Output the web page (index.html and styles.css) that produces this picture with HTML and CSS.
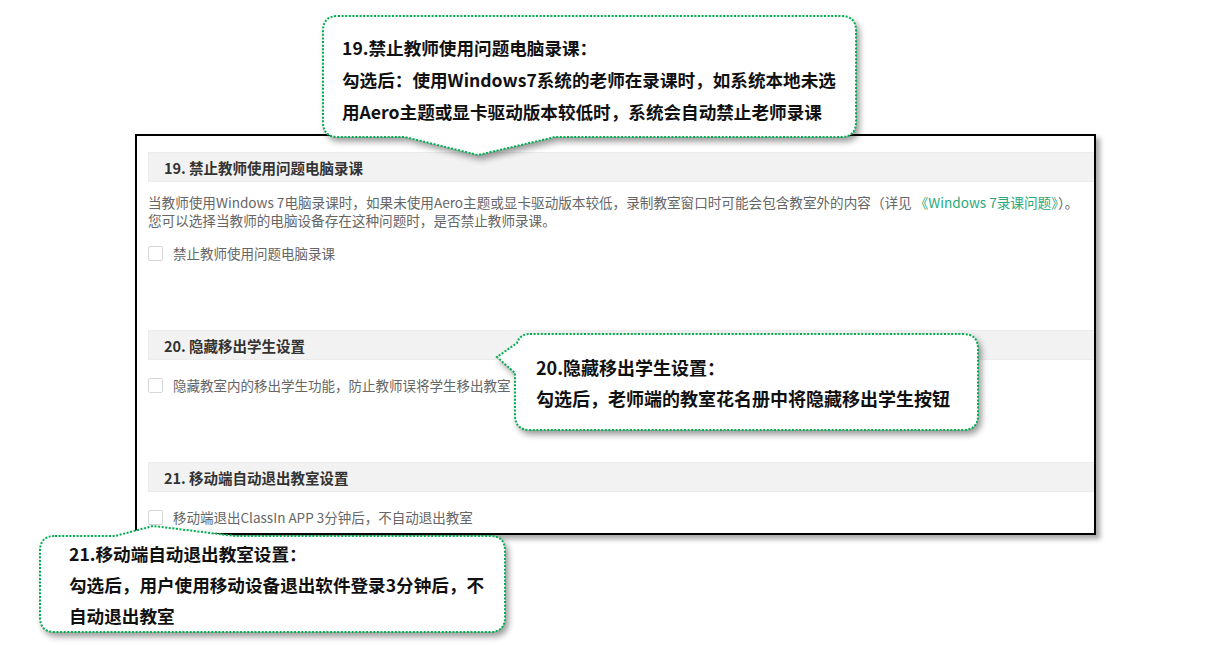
FILE: index.html
```html
<!DOCTYPE html>
<html lang="zh-CN">
<head>
    <meta charset="UTF-8">
    <meta name="viewport" content="width=device-width, initial-scale=1.0">
    <title>教室设置说明</title>
    <link rel="stylesheet" href="styles.css">
</head>
<body>
<div class="stage">

    <!-- 截图区域 -->
    <div class="shot">
        <div class="section">
            <div class="section-title">19. 禁止教师使用问题电脑录课</div>
            <p class="section-desc">当教师使用Windows 7电脑录课时，如果未使用Aero主题或显卡驱动版本较低，录制教室窗口时可能会包含教室外的内容（详见 <a href="#" class="link">《Windows 7录课问题》</a>）。<br>您可以选择当教师的电脑设备存在这种问题时，是否禁止教师录课。</p>
            <label class="check-row"><span class="check-box"></span>禁止教师使用问题电脑录课</label>
        </div>

        <div class="section">
            <div class="section-title">20. 隐藏移出学生设置</div>
            <label class="check-row"><span class="check-box"></span>隐藏教室内的移出学生功能，防止教师误将学生移出教室</label>
        </div>

        <div class="section">
            <div class="section-title">21. 移动端自动退出教室设置</div>
            <label class="check-row"><span class="check-box"></span>移动端退出ClassIn APP 3分钟后，不自动退出教室</label>
        </div>
    </div>

    <!-- 说明气泡 19 -->
    <div class="callout callout-19">
        <svg class="callout-shape" width="536" height="142" viewBox="-1 -1 536 142">
            <path d="M15,0 H518 Q533,0 533,15 V106 Q533,121 518,121 H232 L155,139 L82,121 H15 Q0,121 0,106 V15 Q0,0 15,0 Z"/>
        </svg>
        <div class="callout-text">19.禁止教师使用问题电脑录课：<br>勾选后：使用Windows7系统的老师在录课时，如系统本地未选<br>用Aero主题或显卡驱动版本较低时，系统会自动禁止老师录课</div>
    </div>

    <!-- 说明气泡 20 -->
    <div class="callout callout-20">
        <svg class="callout-shape" width="486" height="99" viewBox="-1 -1 486 99">
            <path d="M35,0 H468 Q483,0 483,15 V81 Q483,96 468,96 H35 Q20,96 20,81 V39 L2,23 L22,9 Q25,0 35,0 Z"/>
        </svg>
        <div class="callout-text">20.隐藏移出学生设置：<br>勾选后，老师端的教室花名册中将隐藏移出学生按钮</div>
    </div>

    <!-- 说明气泡 21 -->
    <div class="callout callout-21">
        <svg class="callout-shape" width="468" height="111" viewBox="-1 -1 468 111">
            <path d="M15,12 H75 L113,2 L195,12 H450 Q465,12 465,27 V93 Q465,108 450,108 H15 Q0,108 0,93 V27 Q0,12 15,12 Z"/>
        </svg>
        <div class="callout-text">21.移动端自动退出教室设置：<br>勾选后，用户使用移动设备退出软件登录3分钟后，不<br>自动退出教室</div>
    </div>

</div>
</body>
</html>
```

FILE: styles.css
```css
/* 基本样式 */
body {
    margin: 0;
    background-color: #fff;
    font-family: "Noto Sans CJK SC", "Noto Sans", sans-serif;
}

.stage {
    position: relative;
    width: 1207px;
    height: 645px;
    padding: 134px 0 0 135px;
    box-sizing: border-box;
    overflow: hidden;
}

/* 截图框 */
.shot {
    width: 961px;
    height: 401px;
    box-sizing: border-box;
    border: 2px solid #000;
    padding: 16px 0 0 11px;
    overflow: hidden;
    background-color: #fff;
    box-shadow: 4px 4px 5px rgba(0, 0, 0, 0.35);
}

.section {
    display: flex;
    flex-direction: column;
    margin-bottom: 67px;
}

.section-title {
    height: 30px;
    line-height: 30px;
    padding-left: 15px;
    background-color: #f2f2f2;
    border: 1px solid #ececec;
    border-right: none;
    box-sizing: border-box;
    font-size: 14.5px;
    font-weight: 700;
    color: #333;
}

.section-desc {
    margin: 11px 0 0;
    font-size: 13.6px;
    line-height: 18px;
    color: #666;
    white-space: nowrap;
}

.link {
    color: #2aaa7c;
    text-decoration: none;
}

.check-row {
    display: flex;
    align-items: center;
    gap: 10px;
    height: 20px;
    margin-top: 15px;
    font-size: 13.5px;
    color: #666;
}

.section-desc + .check-row {
    margin-top: 14px;
}

.check-box {
    width: 15px;
    height: 15px;
    box-sizing: border-box;
    border: 1px solid #d6d6d6;
    border-radius: 2px;
    background-color: #fff;
}

/* 说明气泡 */
.callout {
    position: absolute;
}

.callout-shape {
    position: absolute;
    left: -1px;
    top: -1px;
    overflow: visible;
    filter: drop-shadow(3px 4px 3px rgba(0, 0, 0, 0.4));
}

.callout-shape path {
    fill: #fff;
    stroke: #00b050;
    stroke-width: 2;
    stroke-dasharray: 2 1.6;
}

.callout-text {
    position: relative;
    font-weight: 700;
    color: #111;
    white-space: nowrap;
}

.callout-19 {
    left: 323px;
    top: 16px;
}

.callout-19 .callout-text {
    padding: 16px 0 0 19px;
    font-size: 17.6px;
    line-height: 32px;
}

.callout-20 {
    left: 495px;
    top: 334px;
}

.callout-20 .callout-text {
    padding: 18px 0 0 41px;
    font-size: 18px;
    line-height: 31px;
}

.callout-21 {
    left: 40px;
    top: 524px;
}

.callout-21 .callout-text {
    padding: 14px 0 0 29px;
    font-size: 17.6px;
    line-height: 31px;
}
```
